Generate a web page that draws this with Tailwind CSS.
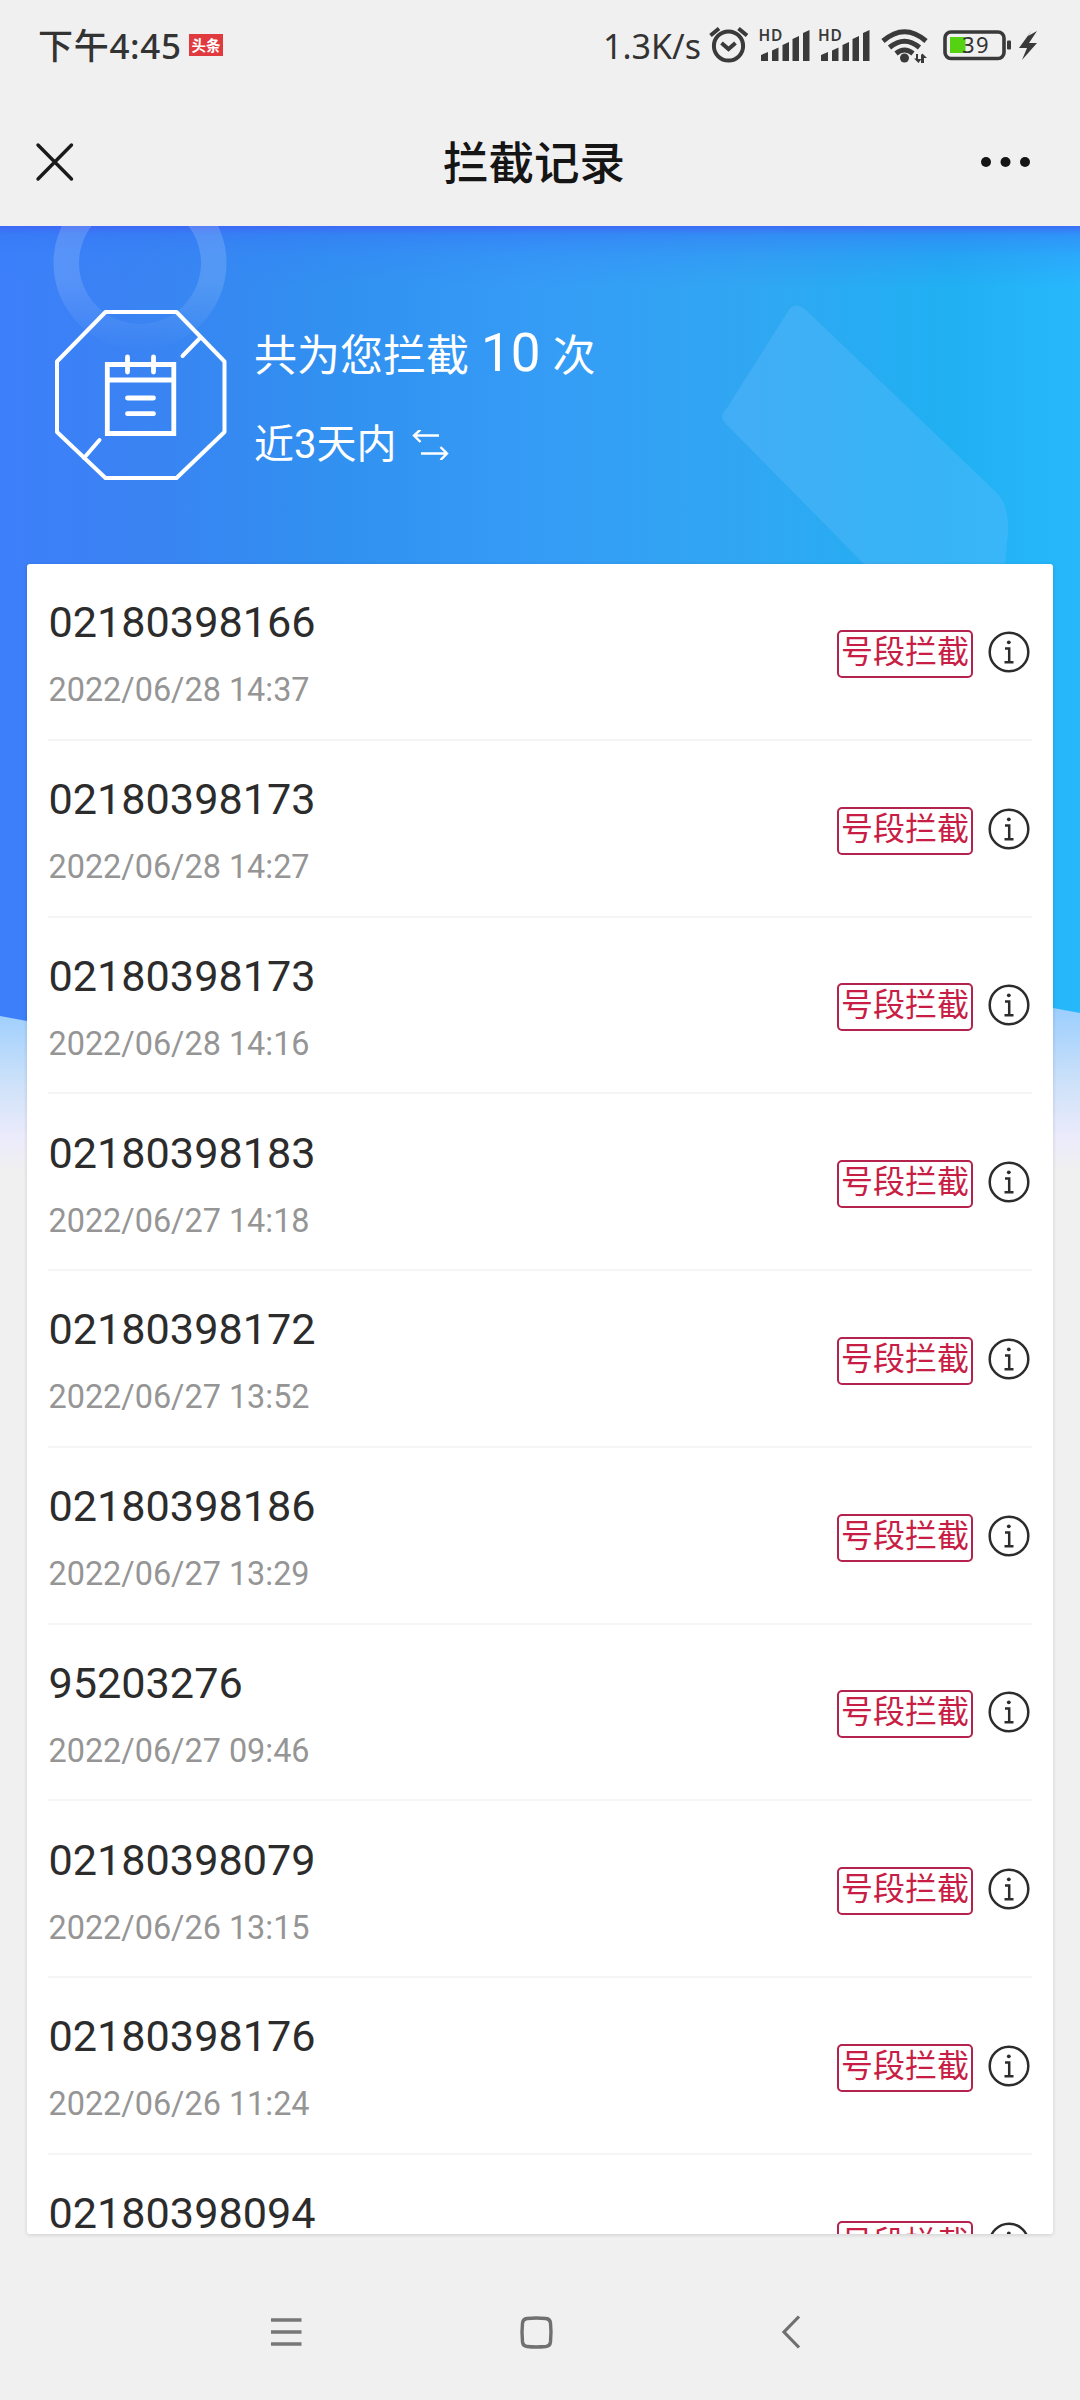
<!DOCTYPE html>
<html lang="zh-CN">
<head>
<meta charset="utf-8">
<title>拦截记录</title>
<script src="https://cdn.jsdelivr.net/npm/@tailwindcss/browser@4"></script>
</head>
<body class="w-[1080px] h-[2400px] overflow-hidden bg-[#f0f0f0] flex flex-col font-[Roboto,'Noto_Sans_CJK_SC',sans-serif]">

<!-- Status bar -->
<header class="h-[92px] shrink-0 flex items-center justify-between pl-[38px] pr-[42px] text-[#333]">
  <div class="flex items-center font-[Noto_Sans,'Noto_Sans_CJK_SC',sans-serif] text-[35px] leading-none">
    <span class="w-[142px] mt-[-2px] whitespace-nowrap tracking-[0.7px] font-medium">下午4:45</span>
    <span class="ml-[9px] mt-[-2px] w-[34px] h-[22px] bg-[#e03a3e] text-white text-[14.5px] font-bold flex items-center justify-center whitespace-nowrap">头条</span>
  </div>
  <div class="flex items-center">
    <span class="font-[Noto_Sans,sans-serif] text-[34px] leading-none w-[102px] whitespace-nowrap">1.3K/s</span>
    <svg class="w-[333px] h-[44px] shrink-0" viewBox="705 24 333 44" fill="none" stroke="#3a3a3a">
      <g stroke-width="4"><circle cx="728.5" cy="46" r="14.6"/><path d="M721.500 43l7 6 7-6M710.500 35.500l8.500-7M738.500 28.500l8.500 7"/></g>
      <g fill="#3a3a3a" stroke="none">
        <text x="758.500 771" y="41" font-family="Noto Sans" font-size="15.500" font-weight="600">HD</text>
        <path d="M761 55l7-3v9h-7zM772 50.500l6.500-3V61H772zM782.500 45l6.500-3v19h-6.500zM792.500 39l6.500-3v25h-6.500zM803 33l6.500-3v31H803z"/>
        <text x="818 830.500" y="41" font-family="Noto Sans" font-size="15.500" font-weight="600">HD</text>
        <path d="M821 55l7-3v9h-7zM832 50.500l6.500-3V61H832zM842.500 45l6.500-3v19h-6.500zM852.500 39l6.500-3v25h-6.500zM863 33l6.500-3v31H863z"/>
        <circle cx="904.500" cy="58" r="4.500"/>
        <path d="M918 54v5h3.500l-3 4-4.500-4.500h2V54zM921 63v-8l1.500-1.500 4.500 4.500h-3v5z"/>
        <path d="M1032 30l-13 18h8l-5 12 15-17h-8l8-12-9 5z"/>
        <rect x="1007" y="40.500" width="4" height="9" rx="1"/>
      </g>
      <g stroke-width="5"><path d="M883 41q21.500-18.500 43 0M889.500 47.500q15-12.500 30 0M896 53.500q8.500-7 17 0"/></g>
      <rect x="950" y="37" width="15.500" height="16" fill="#55d312" stroke="none"/>
      <rect x="945" y="32" width="59" height="26.500" rx="6" stroke-width="3.600"/>
      <text x="962 976" y="53" font-family="Noto Sans" font-size="22" font-weight="400" fill="#333" stroke="none">39</text>
    </svg>
  </div>
</header>

<!-- Title bar -->
<nav class="h-[134px] shrink-0 flex items-center justify-between pl-[35px] pr-[48px] pt-[5px] text-[#151515]">
  <svg class="w-[40px] h-[40px]" viewBox="0 0 40 40" fill="none" stroke="#1a1a1a" stroke-width="3.400" stroke-linecap="round"><path d="M3 3l33.500 34M36.500 3L3 37"/></svg>
  <h1 class="text-[45.5px] leading-none font-medium pl-[13px] pt-[6px]">拦截记录</h1>
  <svg class="w-[52px] h-[12px]" viewBox="0 0 52 12" fill="#151515"><circle cx="6" cy="6" r="5"/><circle cx="25.500" cy="6" r="5"/><circle cx="45" cy="6" r="5"/></svg>
</nav>

<main class="relative h-[2008px] shrink-0 px-[27px]">
  <!-- Banner backdrop -->
  <svg class="absolute inset-0 w-[1080px] h-[950px]" viewBox="0 226 1080 950">
    <defs>
      <linearGradient id="sky" x1="0" x2="1"><stop offset="0" stop-color="#3d7ffa"/><stop offset=".13" stop-color="#3a83f3"/><stop offset=".3" stop-color="#3190f0"/><stop offset=".5" stop-color="#359cf6"/><stop offset=".7" stop-color="#30a7f2"/><stop offset=".88" stop-color="#20b0f2"/><stop offset="1" stop-color="#27b8fc"/></linearGradient>
      <linearGradient id="top" x1="0" x2="0" y1="0" y2="1"><stop offset="0" stop-color="#3f66f5" stop-opacity=".9"/><stop offset=".15" stop-color="#3577f5" stop-opacity=".55"/><stop offset=".5" stop-color="#3580f8" stop-opacity=".25"/><stop offset="1" stop-color="#3a80f8" stop-opacity="0"/></linearGradient>
      <linearGradient id="fade" x1="0" x2="0" y1="0" y2="1"><stop offset="0" stop-color="#96ccff"/><stop offset=".5" stop-color="#cfe2f9"/><stop offset=".8" stop-color="#ecebfb"/><stop offset="1" stop-color="#f0f0f0"/></linearGradient>
      <linearGradient id="ring" x1="0" x2="0" y1="0" y2="1"><stop offset="0" stop-color="#fff" stop-opacity=".17"/><stop offset=".6" stop-color="#fff" stop-opacity=".14"/><stop offset="1" stop-color="#fff" stop-opacity="0"/></linearGradient>
    </defs>
    <rect y="1000" width="1080" height="172" fill="url(#fade)"/>
    <path d="M0 226H1080V1013L1053 1008Q540 1110 27 1021L0 1016Z" fill="url(#sky)"/>
    <rect y="226" width="1080" height="62" fill="url(#top)"/>
    <path fill="url(#ring)" fill-rule="evenodd" d="M53.500 263a86.500 86.500 0 1 0 173 0a86.500 86.500 0 1 0-173 0zM79 263a61 61 0 1 1 122 0a61 61 0 1 1-122 0z"/>
    <path fill="#60beff" fill-opacity=".35" d="M790 308Q797 302 806 310L996 492Q1009 504 1008 532L1005 566H866L726 424Q718 416 727 408Z"/>
  </svg>

  <!-- Summary -->
  <section class="relative h-[338px] flex pl-[26px] pt-[82px] text-white">
    <svg class="w-[176px] h-[176px]" viewBox="53 308 176 176" fill="none" stroke="#fff" stroke-width="4" stroke-linejoin="round">
      <path d="M105.500 312H176.500L224.500 361.500V432L176.500 478H105.500L57 432V361.500Z"/>
      <path d="M200 338L182.500 356M84 458L99.500 440" stroke-linecap="round"/>
      <g stroke-width="4.800"><path d="M107.300 364.500H173.800V433.500H107.300ZM107 380H174" stroke-linejoin="miter"/><path d="M127.500 357V372M153.500 357V372M127.500 398H153.500M127.500 413.700H153.500" stroke-linecap="round"/></g>
    </svg>
    <div class="pl-[25px] pt-[14px]">
      <p class="h-[63px] flex items-baseline leading-[63px] text-[43px] whitespace-nowrap">共为您拦截<span class="text-[53px] ml-[12px] mr-[12px]">10</span>次</p>
      <p class="mt-[30px] h-[60px] flex items-center text-[40px] leading-[60px] whitespace-nowrap">近3天内
        <svg class="ml-[15px] w-[38px] h-[30px]" viewBox="410 428 38 30" fill="none" stroke="#fff" stroke-width="2.400"><path d="M438 433.500H413M419.500 427.500L413 433.500L419.500 440M420 451.500H446M439.500 445L446 451.500L439.500 458"/></svg>
      </p>
    </div>
  </section>

  <!-- Records -->
  <ul id="records" class="relative h-[1670px] w-[1026px] overflow-hidden rounded-[3px] bg-white px-[21px] shadow-[0_1px_4px_rgba(0,0,0,0.14)]"></ul>
</main>

<!-- System navigation -->
<footer class="grow flex items-start pt-[81px] pl-[270px]">
  <svg class="w-[32px] h-[34px]" viewBox="0 0 32 34" stroke="#777" stroke-width="3.600"><path d="M1 5h30.500M1 17h30.500M1 29h30.500"/></svg>
  <svg class="ml-[217px] w-[36px] h-[36px]" viewBox="0 0 36 36" fill="none" stroke="#707070" stroke-width="3.400"><path d="M8 3.500Q17 2.500 27 3.500Q31 4 31.500 8Q32.500 17 31.500 27Q31 31 27 31.500Q17 32.500 8 31.500Q4 31 3.500 27Q2.500 17 3.500 8Q4 4 8 3.500Z"/></svg>
  <svg class="ml-[224px] w-[22px] h-[34px]" viewBox="0 0 22 34" fill="none" stroke="#707070" stroke-width="3.200"><path d="M20 1.500L5 17L20 32.500"/></svg>
</footer>

<script>
const records = [
  ["02180398166", "2022/06/28 14:37"],
  ["02180398173", "2022/06/28 14:27"],
  ["02180398173", "2022/06/28 14:16"],
  ["02180398183", "2022/06/27 14:18"],
  ["02180398172", "2022/06/27 13:52"],
  ["02180398186", "2022/06/27 13:29"],
  ["95203276", "2022/06/27 09:46"],
  ["02180398079", "2022/06/26 13:15"],
  ["02180398176", "2022/06/26 11:24"],
  ["02180398094", "2022/06/26 10:52"],
];
document.getElementById("records").innerHTML = records.map(([number, time]) => `
  <li class="h-[176.75px] flex items-center justify-between border-b-2 border-[#f5f5f5]">
    <div class="flex flex-col gap-[16px] pt-[10px] pl-[0.5px]">
      <span class="text-[43.2px] leading-[52px] text-[#2c2c2c]">${number}</span>
      <span class="text-[32.4px] leading-[50px] text-[#959595]">${time}</span>
    </div>
    <div class="flex items-center gap-[15px] pr-[2px] pt-px">
      <span class="mt-[4px] w-[136px] h-[48px] rounded-[5px] border-[2.5px] border-[#b3234e] text-[#c81e46] text-[32px] leading-[41px] flex justify-center whitespace-nowrap">号段拦截</span>
      <svg class="w-[42px] h-[42px]" viewBox="0 0 42 42" fill="none" stroke="#2c2c2c" stroke-width="2.500"><circle cx="21" cy="21" r="19.300"/><path d="M17 17.500h4.200V31M16.500 31.200h9"/><circle cx="20.800" cy="11.300" r="1.900" fill="#2c2c2c" stroke="none"/></svg>
    </div>
  </li>`).join("");
</script>
</body>
</html>
